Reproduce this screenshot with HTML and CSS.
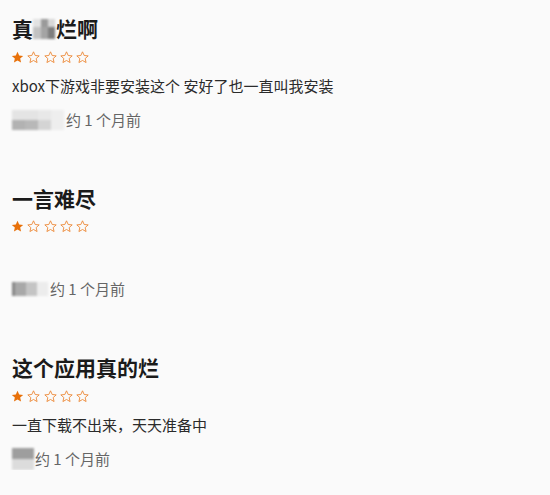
FILE: index.html
```html
<!DOCTYPE html>
<html lang="zh">
<head>
<meta charset="utf-8">
<link rel="stylesheet" href="styles.css">
</head>
<body>
<div class="list">
  <div class="review">
    <div class="title">真<span class="mosaic m-title"><i class="c1"></i><i class="c2"></i><i class="c5"></i><i class="c3"></i><i class="c4"></i><i class="c6"></i></span>烂啊</div>
    <div class="stars">
      <svg class="star" viewBox="0 0 24 24"><path class="fill" d="M12 1.5l3.1 6.8 7.4.7-5.6 5 1.7 7.3L12 17.5l-6.6 3.8 1.7-7.3-5.6-5 7.4-.7z"/></svg>
      <svg class="star" viewBox="0 0 24 24"><path class="line" d="M12 1.5l3.1 6.8 7.4.7-5.6 5 1.7 7.3L12 17.5l-6.6 3.8 1.7-7.3-5.6-5 7.4-.7z"/></svg>
      <svg class="star" viewBox="0 0 24 24"><path class="line" d="M12 1.5l3.1 6.8 7.4.7-5.6 5 1.7 7.3L12 17.5l-6.6 3.8 1.7-7.3-5.6-5 7.4-.7z"/></svg>
      <svg class="star" viewBox="0 0 24 24"><path class="line" d="M12 1.5l3.1 6.8 7.4.7-5.6 5 1.7 7.3L12 17.5l-6.6 3.8 1.7-7.3-5.6-5 7.4-.7z"/></svg>
      <svg class="star" viewBox="0 0 24 24"><path class="line" d="M12 1.5l3.1 6.8 7.4.7-5.6 5 1.7 7.3L12 17.5l-6.6 3.8 1.7-7.3-5.6-5 7.4-.7z"/></svg>
    </div>
    <div class="body">xbox下游戏非要安装这个 安好了也一直叫我安装</div>
    <div class="meta"><span class="mosaic m-name1"><i class="a"></i><i class="a"></i><i class="b"></i><i class="e"></i><i class="d1"></i><i class="d2"></i><i class="d3"></i><i class="e"></i></span><span class="time">约 1 个月前</span></div>
  </div>

  <div class="review">
    <div class="title">一言难尽</div>
    <div class="stars">
      <svg class="star" viewBox="0 0 24 24"><path class="fill" d="M12 1.5l3.1 6.8 7.4.7-5.6 5 1.7 7.3L12 17.5l-6.6 3.8 1.7-7.3-5.6-5 7.4-.7z"/></svg>
      <svg class="star" viewBox="0 0 24 24"><path class="line" d="M12 1.5l3.1 6.8 7.4.7-5.6 5 1.7 7.3L12 17.5l-6.6 3.8 1.7-7.3-5.6-5 7.4-.7z"/></svg>
      <svg class="star" viewBox="0 0 24 24"><path class="line" d="M12 1.5l3.1 6.8 7.4.7-5.6 5 1.7 7.3L12 17.5l-6.6 3.8 1.7-7.3-5.6-5 7.4-.7z"/></svg>
      <svg class="star" viewBox="0 0 24 24"><path class="line" d="M12 1.5l3.1 6.8 7.4.7-5.6 5 1.7 7.3L12 17.5l-6.6 3.8 1.7-7.3-5.6-5 7.4-.7z"/></svg>
      <svg class="star" viewBox="0 0 24 24"><path class="line" d="M12 1.5l3.1 6.8 7.4.7-5.6 5 1.7 7.3L12 17.5l-6.6 3.8 1.7-7.3-5.6-5 7.4-.7z"/></svg>
    </div>
    <div class="body"></div>
    <div class="meta"><span class="mosaic m-name2"><i class="s"></i><i class="d1"></i><i class="d2"></i><i class="d3"></i></span><span class="time">约 1 个月前</span></div>
  </div>

  <div class="review">
    <div class="title">这个应用真的烂</div>
    <div class="stars">
      <svg class="star" viewBox="0 0 24 24"><path class="fill" d="M12 1.5l3.1 6.8 7.4.7-5.6 5 1.7 7.3L12 17.5l-6.6 3.8 1.7-7.3-5.6-5 7.4-.7z"/></svg>
      <svg class="star" viewBox="0 0 24 24"><path class="line" d="M12 1.5l3.1 6.8 7.4.7-5.6 5 1.7 7.3L12 17.5l-6.6 3.8 1.7-7.3-5.6-5 7.4-.7z"/></svg>
      <svg class="star" viewBox="0 0 24 24"><path class="line" d="M12 1.5l3.1 6.8 7.4.7-5.6 5 1.7 7.3L12 17.5l-6.6 3.8 1.7-7.3-5.6-5 7.4-.7z"/></svg>
      <svg class="star" viewBox="0 0 24 24"><path class="line" d="M12 1.5l3.1 6.8 7.4.7-5.6 5 1.7 7.3L12 17.5l-6.6 3.8 1.7-7.3-5.6-5 7.4-.7z"/></svg>
      <svg class="star" viewBox="0 0 24 24"><path class="line" d="M12 1.5l3.1 6.8 7.4.7-5.6 5 1.7 7.3L12 17.5l-6.6 3.8 1.7-7.3-5.6-5 7.4-.7z"/></svg>
    </div>
    <div class="body">一直下载不出来，天天准备中</div>
    <div class="meta"><span class="mosaic m-name3"><i class="t"></i><i class="u"></i></span><span class="time">约 1 个月前</span></div>
  </div>
</div>
</body>
</html>
```

FILE: styles.css
```css
html, body {
  margin: 0;
  padding: 0;
  background: #fafafa;
}
body {
  font-family: "Noto Sans CJK SC", "Noto Sans", sans-serif;
  color: #222;
}
.list {
  padding: 14px 12px 0 12px;
  display: flex;
  flex-direction: column;
  gap: 53px;
}
.review {
  display: flex;
  flex-direction: column;
}
.title {
  font-size: 21px;
  font-weight: 700;
  line-height: 28px;
  height: 28px;
  color: #1b1b1b;
  display: flex;
  align-items: center;
}
.stars {
  margin-top: 8px;
  height: 14px;
  display: flex;
  align-items: center;
  gap: 3.3px;
  margin-left: -1px;
}
.star {
  width: 13px;
  height: 13px;
  display: block;
}
.star .fill {
  fill: #e8710a;
}
.star .line {
  fill: none;
  stroke: #ec8a3a;
  stroke-width: 1.7;
  stroke-linejoin: round;
}
.body {
  margin-top: 11px;
  font-size: 15px;
  line-height: 22px;
  min-height: 22px;
  color: #2b2b2b;
}
.meta {
  margin-top: 11.5px;
  height: 22px;
  display: flex;
  align-items: center;
  font-size: 15px;
  line-height: 22px;
  color: #666;
}
.time {
  white-space: pre;
}
.mosaic {
  display: grid;
  filter: blur(0.8px);
}
.mosaic i {
  display: block;
}
.m-title {
  width: 22px;
  height: 20px;
  margin: 2px 1px 0 0;
  grid-template-columns: 8px 7px 7px;
  grid-template-rows: 8px 12px;
}
.m-title .c1 { background: #e2e2e2; }
.m-title .c2 { background: #9a9a9a; }
.m-title .c5 { background: #d8d8d8; }
.m-title .c3 { background: #c2c2c2; }
.m-title .c4 { background: #a4a4a4; }
.m-title .c6 { background: #7e7e7e; }
.m-name1 {
  width: 52px;
  height: 20px;
  margin-right: 2px;
  grid-template-columns: 13px 13px 13px 13px;
  grid-template-rows: 10px 10px;
}
.m-name1 .a { background: #e4e4e4; }
.m-name1 .b { background: #e8e8e8; }
.m-name1 .e { background: #eeeeee; }
.m-name1 .d1 { background: #b2b2b2; }
.m-name1 .d2 { background: #b8b8b8; }
.m-name1 .d3 { background: #d4d4d4; }
.m-name2 {
  width: 36px;
  height: 14px;
  margin-right: 2px;
  grid-template-columns: 3px 11px 11px 11px;
  grid-template-rows: 14px;
}
.m-name2 .s { background: #888; }
.m-name2 .d1 { background: #a8a8a8; }
.m-name2 .d2 { background: #c4c4c4; }
.m-name2 .d3 { background: #ececec; }
.m-name3 {
  width: 22px;
  height: 22px;
  margin-right: 1px;
  grid-template-columns: 22px;
  grid-template-rows: 11px 11px;
}
.m-name3 .t { background: #9e9e9e; }
.m-name3 .u { background: #dcdcdc; }
```
